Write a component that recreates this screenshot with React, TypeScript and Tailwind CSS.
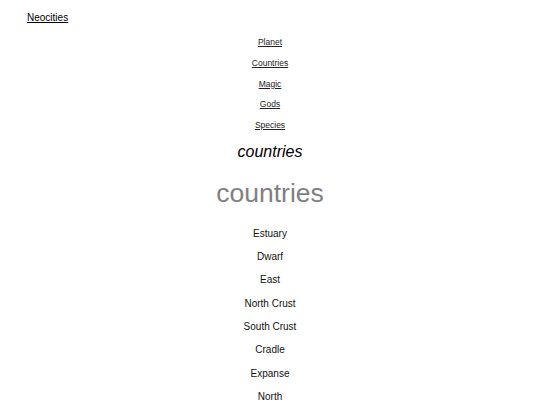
const NAV_LINKS = ['Planet', 'Countries', 'Magic', 'Gods', 'Species'];

const COUNTRIES = [
  'Estuary',
  'Dwarf',
  'East',
  'North Crust',
  'South Crust',
  'Cradle',
  'Expanse',
  'North',
];

export default function App() {
  return (
    <div className="min-h-screen bg-white text-black font-['Liberation_Sans',Arial,sans-serif]">
      <header className="pt-[12px] pl-[27px]">
        <a href="#" className="block w-fit text-[10px] leading-[12px] text-black underline">
          Neocities
        </a>
      </header>

      <nav className="mt-[8px] flex flex-col items-center">
        {NAV_LINKS.map((link) => (
          <a
            key={link}
            href="#"
            className="text-[8.5px] leading-[20.75px] text-[#222] underline"
          >
            {link}
          </a>
        ))}
      </nav>

      <main className="flex flex-col items-center">
        <h2 className="mt-[4px] text-[16px] leading-[24px] italic">countries</h2>
        <h1 className="mt-[11px] text-[26.5px] leading-[36px] text-[#808080]">countries</h1>

        <ul className="mt-[11px] flex flex-col items-center">
          {COUNTRIES.map((name) => (
            <li key={name} className="text-[10px] leading-[23.3px] text-[#111]">
              {name}
            </li>
          ))}
        </ul>
      </main>
    </div>
  );
}
